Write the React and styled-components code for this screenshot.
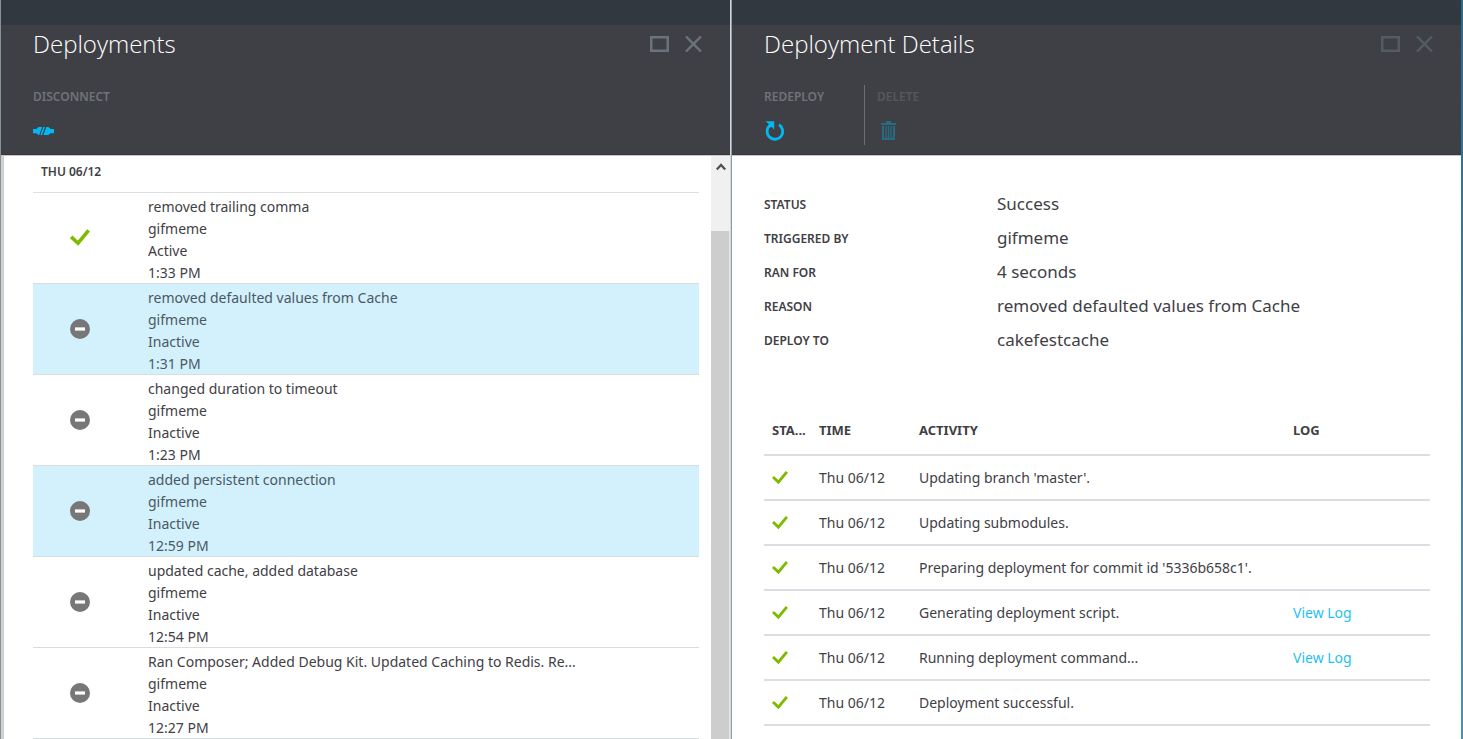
import React from "react";
import styled, { createGlobalStyle } from "styled-components";

const GlobalStyle = createGlobalStyle`
  *, *::before, *::after { box-sizing: border-box; }
  body {
    margin: 0;
    background: #ffffff;
    color: #3f4045;
    font-family: "Noto Sans", "Open Sans", sans-serif;
    font-size: 14px;
  }
  button { border: 0; padding: 0; background: none; font: inherit; color: inherit; cursor: pointer; }
  h1, h2, ul, dl, dd, p { margin: 0; padding: 0; font-weight: inherit; }
  svg { display: block; }
`;

const Shell = styled.main`
  display: flex;
  min-height: 100vh;
  border-left: 1px solid #87919b;
`;

const Blade = styled.section`
  flex: 1 1 0;
  min-width: 0;
  display: flex;
  flex-direction: column;
`;

const Divider = styled.div`
  width: 2px;
  border-left: 1px solid #d3d9dd;
  background: #8f9ca7;
`;

const Edge = styled.div`
  width: 2px;
  background: linear-gradient(#2c6a8c, #4a93b6);
`;

const Header = styled.header`
  border-top: 25px solid #31383f;
  border-bottom: 1px solid #36363b;
  background: #3f4045;
  padding: 0 28px 9px 32px;
`;

const TitleRow = styled.div`
  display: flex;
  align-items: center;
  height: 38px;
  gap: 16px;
`;

const Title = styled.h1`
  flex: 1;
  color: #ffffff;
  font-family: "Open Sans", "Noto Sans", sans-serif;
  font-size: 24px;
  font-weight: 300;
  line-height: 38px;
`;

const WindowButton = styled.button`
  color: ${(p) => (p.$dim ? "#545b63" : "#6a737c")};
`;

const Toolbar = styled.div`
  display: flex;
  height: 60px;
  margin-top: 22px;
`;

const Command = styled.button`
  display: flex;
  flex-direction: column;
  gap: 10px;
  min-width: 100px;
  color: ${(p) => (p.$dim ? "#54585d" : "#6e7379")};
  font-size: 12px;
  font-weight: 600;
  line-height: 24px;
  text-align: left;

  & + & {
    border-left: 1px solid #6c7075;
    padding-left: 12px;
  }
`;

const CommandIcon = styled.span`
  display: flex;
  align-items: center;
  height: 24px;
  color: ${(p) => (p.$dim ? "#286a82" : "#00b9f2")};
`;

const ListBody = styled.div`
  flex: 1;
  display: flex;
  border-top: 1px solid #c9c7cc;
  border-left: 3px solid #d0d0d0;
`;

const ListArea = styled.div`
  flex: 1;
  min-width: 0;
  padding: 0 12px 0 29px;
`;

const DayHeading = styled.h2`
  height: 37px;
  padding: 0 8px;
  border-bottom: 1px solid #dddfe5;
  font-size: 12px;
  font-weight: 600;
  line-height: 32px;
`;

const DeploymentList = styled.ul`
  list-style: none;
`;

const Deployment = styled.li`
  display: flex;
  align-items: center;
  border-bottom: 1px solid #dadde0;
  background: ${(p) => (p.$selected ? "#d3f0fd" : "#ffffff")};
  color: ${(p) => (p.$selected ? "#4a5961" : "#3f4045")};
`;

const StatusMark = styled.span`
  display: flex;
  justify-content: center;
  width: 93px;
`;

const Summary = styled.div`
  flex: 1;
  min-width: 0;
  padding: 3px 0 0 22px;
`;

const Line = styled.p`
  max-width: 435px;
  overflow: hidden;
  white-space: nowrap;
  text-overflow: ellipsis;
  line-height: 22px;
`;

const Time = styled(Line)`
  line-height: 21px;
`;

const Rail = styled.div`
  display: flex;
  flex-direction: column;
  width: 19px;
  background: #f0f0f0;
`;

const RailButton = styled.button`
  display: flex;
  align-items: center;
  justify-content: center;
  height: 21px;
  margin-bottom: 54px;
  color: #505050;
`;

const Thumb = styled.div`
  flex: 1;
  background: #cdcdcd;
  border-right: 1px solid #e6e6e6;
`;

const DetailBody = styled.div`
  border-top: 1px solid #c9c7cc;
  padding: 31px 31px 0 32px;
`;

const Facts = styled.dl`
  display: grid;
  grid-template-columns: 233px 1fr;
  grid-auto-rows: 34px;
  align-items: center;
`;

const FactName = styled.dt`
  font-size: 12px;
  font-weight: 600;
`;

const FactValue = styled.dd`
  font-size: 17px;
  line-height: 34px;
`;

const ActivityTable = styled.table`
  width: 100%;
  margin-top: 49px;
  border-collapse: separate;
  border-spacing: 0;
  table-layout: fixed;
`;

const Col = styled.col`
  width: ${(p) => p.$width};
`;

const Cell = styled.td`
  height: 45px;
  padding: 0 0 0 8px;
  border-bottom: 2px solid #dadde1;
  white-space: nowrap;
`;

const HeadCell = styled.th`
  height: 50px;
  padding: 0 4px 0 8px;
  border-bottom: 2px solid #dadde1;
  white-space: nowrap;
  text-align: left;
  font-size: 13px;
  font-weight: 700;
`;

const LogLink = styled.a`
  color: #1fbff0;
  text-decoration: none;
`;

const MaximizeIcon = () => (
  <svg width="19" height="16" viewBox="0 0 19 16" aria-hidden="true">
    <rect x="1.25" y="1.25" width="16.5" height="13.5" fill="none" stroke="currentColor" strokeWidth="2.5" />
  </svg>
);

const CloseIcon = () => (
  <svg width="17" height="16" viewBox="0 0 17 16" aria-hidden="true">
    <path d="M1 .5 16 15.5M16 .5 1 15.5" stroke="currentColor" strokeWidth="2.4" />
  </svg>
);

const CheckIcon = ({ size }) => (
  <svg width={size} height={size} viewBox="0 0 20 20" role="img" aria-label="Success">
    <path d="M1.2 8.8 8 15.2 18.6 2.4" fill="none" stroke="#7fba00" strokeWidth="3.6" />
  </svg>
);

const InactiveIcon = () => (
  <svg width="20" height="20" viewBox="0 0 20 20" role="img" aria-label="Inactive">
    <circle cx="10" cy="10" r="10" fill="#777777" />
    <rect x="5" y="8.4" width="10" height="3.2" fill="#ffffff" />
  </svg>
);

const DisconnectIcon = () => (
  <svg width="21" height="10" viewBox="0 0 21 10" fill="currentColor" aria-hidden="true">
    <path d="M0 3H3.4L5.6 1H9.2L6.2 9H5.4L3.4 7.2H0ZM10.4 1H12L9 9H7.4ZM13.4 1H15.4L17.6 3H21V7.2H17.6L15.4 9H10.4Z" />
  </svg>
);

const RedeployIcon = () => (
  <svg width="22" height="22" viewBox="0 0 22 22" aria-hidden="true">
    <path d="M15 4.8A7.8 7.8 0 1 1 6 5.4" fill="none" stroke="currentColor" strokeWidth="2.8" />
    <path d="M1.6 1.2H10.2V9.4L7.8 7 4.6 7.6 4.8 4Z" fill="currentColor" />
  </svg>
);

const TrashIcon = () => (
  <svg width="22" height="22" viewBox="0 0 22 22" fill="none" stroke="currentColor" aria-hidden="true">
    <path d="M4 4H19M9 2H14" strokeWidth="2" />
    <path d="M6 6V19H17V6" strokeWidth="2" />
    <path d="M9 6V18M11.5 6V18M14 6V18" strokeWidth="1.4" />
  </svg>
);

const ChevronUp = () => (
  <svg width="10" height="8" viewBox="0 0 10 8" aria-hidden="true">
    <path d="M.8 6.6 5 2 9.2 6.6" fill="none" stroke="currentColor" strokeWidth="2.2" />
  </svg>
);

const deployments = [
  { message: "removed trailing comma", state: "Active", time: "1:33 PM" },
  { message: "removed defaulted values from Cache", state: "Inactive", time: "1:31 PM", selected: true },
  { message: "changed duration to timeout", state: "Inactive", time: "1:23 PM" },
  { message: "added persistent connection", state: "Inactive", time: "12:59 PM", selected: true },
  { message: "updated cache, added database", state: "Inactive", time: "12:54 PM" },
  { message: "Ran Composer; Added Debug Kit. Updated Caching to Redis. Re...", state: "Inactive", time: "12:27 PM" },
];

const facts = [
  ["STATUS", "Success"],
  ["TRIGGERED BY", "gifmeme"],
  ["RAN FOR", "4 seconds"],
  ["REASON", "removed defaulted values from Cache"],
  ["DEPLOY TO", "cakefestcache"],
];

const activities = [
  { text: "Updating branch 'master'." },
  { text: "Updating submodules." },
  { text: "Preparing deployment for commit id '5336b658c1'." },
  { text: "Generating deployment script.", log: true },
  { text: "Running deployment command...", log: true },
  { text: "Deployment successful." },
];

const BladeHeader = ({ title, dim, children }) => (
  <Header>
    <TitleRow>
      <Title>{title}</Title>
      <WindowButton $dim={dim} aria-label="Maximize"><MaximizeIcon /></WindowButton>
      <WindowButton $dim={dim} aria-label="Close"><CloseIcon /></WindowButton>
    </TitleRow>
    <Toolbar>{children}</Toolbar>
  </Header>
);

export default function App() {
  return (
    <>
      <GlobalStyle />
      <Shell>
        <Blade>
          <BladeHeader title="Deployments">
            <Command>
              DISCONNECT
              <CommandIcon><DisconnectIcon /></CommandIcon>
            </Command>
          </BladeHeader>
          <ListBody>
            <ListArea>
              <DayHeading>THU 06/12</DayHeading>
              <DeploymentList>
                {deployments.map((d) => (
                  <Deployment key={d.time} $selected={d.selected}>
                    <StatusMark>
                      {d.state === "Active" ? <CheckIcon size={20} /> : <InactiveIcon />}
                    </StatusMark>
                    <Summary>
                      <Line>{d.message}</Line>
                      <Line>gifmeme</Line>
                      <Line>{d.state}</Line>
                      <Time>{d.time}</Time>
                    </Summary>
                  </Deployment>
                ))}
              </DeploymentList>
            </ListArea>
            <Rail>
              <RailButton aria-label="Scroll up"><ChevronUp /></RailButton>
              <Thumb />
            </Rail>
          </ListBody>
        </Blade>
        <Divider />
        <Blade>
          <BladeHeader title="Deployment Details" dim>
            <Command>
              REDEPLOY
              <CommandIcon><RedeployIcon /></CommandIcon>
            </Command>
            <Command $dim>
              DELETE
              <CommandIcon $dim><TrashIcon /></CommandIcon>
            </Command>
          </BladeHeader>
          <DetailBody>
            <Facts>
              {facts.map(([name, value]) => (
                <React.Fragment key={name}>
                  <FactName>{name}</FactName>
                  <FactValue>{value}</FactValue>
                </React.Fragment>
              ))}
            </Facts>
            <ActivityTable>
              <colgroup>
                <Col $width="47px" />
                <Col $width="100px" />
                <Col />
                <Col $width="145px" />
              </colgroup>
              <thead>
                <tr>
                  <HeadCell>STA...</HeadCell>
                  <HeadCell>TIME</HeadCell>
                  <HeadCell>ACTIVITY</HeadCell>
                  <HeadCell>LOG</HeadCell>
                </tr>
              </thead>
              <tbody>
                {activities.map((a) => (
                  <tr key={a.text}>
                    <Cell><CheckIcon size={16} /></Cell>
                    <Cell>Thu 06/12</Cell>
                    <Cell>{a.text}</Cell>
                    <Cell>{a.log && <LogLink href="#log">View Log</LogLink>}</Cell>
                  </tr>
                ))}
              </tbody>
            </ActivityTable>
          </DetailBody>
        </Blade>
        <Edge />
      </Shell>
    </>
  );
}
